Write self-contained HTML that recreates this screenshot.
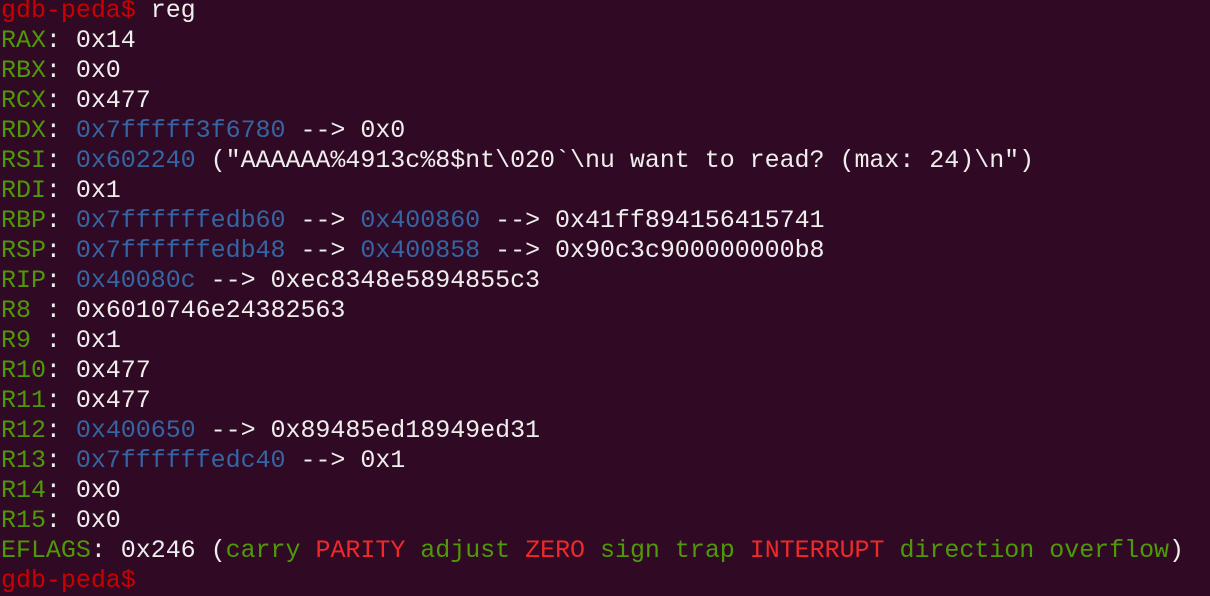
<!DOCTYPE html>
<html><head><meta charset="utf-8"><style>
html,body{margin:0;padding:0;background:#300a24;width:1210px;height:569px;overflow:hidden}
pre{margin:0;position:absolute;left:1px;top:-4px;font-family:"Liberation Mono","DejaVu Sans Mono",monospace;font-size:25px;line-height:30px;color:#eeeeec;letter-spacing:-0.03px}
.g{color:#4e9a06}.b{color:#3465a4}.r{color:#cc0000}.R{color:#ef2929}
</style></head><body><pre><span class="r">gdb-peda$</span> reg
<span class="g">RAX</span>: 0x14
<span class="g">RBX</span>: 0x0
<span class="g">RCX</span>: 0x477
<span class="g">RDX</span>: <span class="b">0x7fffff3f6780</span> --&gt; 0x0
<span class="g">RSI</span>: <span class="b">0x602240</span> ("AAAAAA%4913c%8$nt\020`\nu want to read? (max: 24)\n")
<span class="g">RDI</span>: 0x1
<span class="g">RBP</span>: <span class="b">0x7ffffffedb60</span> --&gt; <span class="b">0x400860</span> --&gt; 0x41ff894156415741
<span class="g">RSP</span>: <span class="b">0x7ffffffedb48</span> --&gt; <span class="b">0x400858</span> --&gt; 0x90c3c900000000b8
<span class="g">RIP</span>: <span class="b">0x40080c</span> --&gt; 0xec8348e5894855c3
<span class="g">R8</span> : 0x6010746e24382563
<span class="g">R9</span> : 0x1
<span class="g">R10</span>: 0x477
<span class="g">R11</span>: 0x477
<span class="g">R12</span>: <span class="b">0x400650</span> --&gt; 0x89485ed18949ed31
<span class="g">R13</span>: <span class="b">0x7ffffffedc40</span> --&gt; 0x1
<span class="g">R14</span>: 0x0
<span class="g">R15</span>: 0x0
<span class="g">EFLAGS</span>: 0x246 (<span class="g">carry</span> <span class="R">PARITY</span> <span class="g">adjust</span> <span class="R">ZERO</span> <span class="g">sign</span> <span class="g">trap</span> <span class="R">INTERRUPT</span> <span class="g">direction</span> <span class="g">overflow</span>)
<span class="r">gdb-peda$</span></pre></body></html>
